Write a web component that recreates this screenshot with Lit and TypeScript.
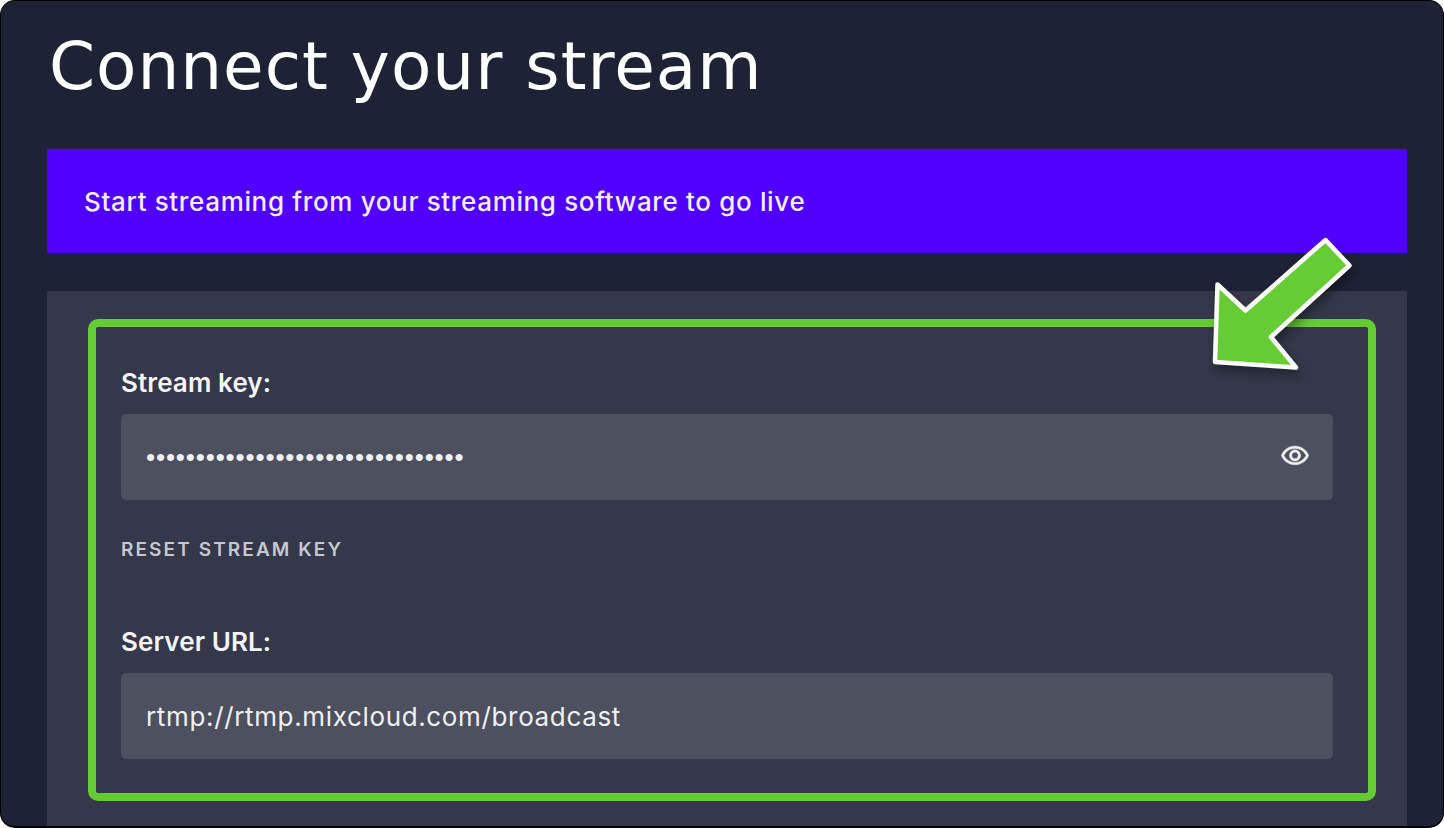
import { LitElement, html, css } from "lit";
import { customElement } from "lit/decorators.js";

@customElement("app-root")
export class AppRoot extends LitElement {
  static styles = css`
    :host { display: block; width: 1444px; height: 828px; background: #fff; font-family: "Inter", "Liberation Sans", sans-serif; }
    .shell { position: relative; box-sizing: border-box; width: 1444px; height: 828px; background: #1e2235; border: 1px solid #000; border-bottom-width: 2px; border-radius: 15px; overflow: hidden; padding: 0 36px 0 46px; }
    h1 { margin: 0; height: 148px; padding: 28px 0 0 2px; box-sizing: border-box; font-family: "DejaVu Sans", sans-serif; font-weight: 400; font-size: 66px; line-height: 76px; letter-spacing: 1px; color: #fff; }
    .banner { height: 104px; background: #5000ff; display: flex; align-items: center; padding-left: 37px; color: #f2eeff; font-size: 26px; font-weight: 500; letter-spacing: 0.65px; }
    .panel { margin-top: 38px; height: 540px; background: #34384a; padding: 28px 31px 0 41px; box-sizing: border-box; }
    .box { box-sizing: border-box; height: 482px; border: 8px solid #66cc33; border-radius: 10px; padding: 38px 35px 0 25px; }
    label { display: block; font-size: 26px; line-height: 36px; font-weight: 600; color: #f4f4f6; letter-spacing: 0.1px; }
    .field { margin-top: 13px; height: 86px; border-radius: 5px; background: #4d505f; display: flex; align-items: center; justify-content: space-between; padding: 0 23px 0 25px; color: #f0f0f2; font-size: 26px; letter-spacing: 0.65px; }
    .dots { font-family: "Liberation Sans", sans-serif; letter-spacing: 0.85px; }
    .eye { width: 30px; height: 30px; fill: #eceded; stroke: #eceded; stroke-width: 0.3; display: block; margin-top: -2px; }
    .reset { margin-top: 40px; height: 20px; line-height: 20px; font-size: 19px; font-weight: 600; letter-spacing: 2.1px; color: #c6c8cf; }
    .second { margin-top: 64px; }
    .arrow { position: absolute; left: -1px; top: -1px; width: 1444px; height: 828px; pointer-events: none; filter: drop-shadow(3px 6px 5px rgba(0,0,0,.35)); }
  `;

  render() {
    return html`<div class="shell">
      <h1>Connect your stream</h1>
      <div class="banner">Start streaming from your streaming software to go live</div>
      <div class="panel">
        <div class="box">
          <label>Stream key:</label>
          <div class="field">
            <span class="dots">••••••••••••••••••••••••••••••••</span>
            <svg class="eye" viewBox="0 0 24 24"><path d="M12 6a9.77 9.77 0 0 1 8.82 5.5C19.17 14.87 15.79 17 12 17s-7.17-2.13-8.82-5.5A9.77 9.77 0 0 1 12 6m0-2C7 4 2.73 7.11 1 11.5 2.73 15.89 7 19 12 19s9.27-3.11 11-7.5C21.27 7.11 17 4 12 4zm0 5a2.5 2.5 0 0 1 0 5 2.5 2.5 0 0 1 0-5m0-2c-2.48 0-4.5 2.02-4.5 4.5S9.52 16 12 16s4.5-2.02 4.5-4.5S14.48 7 12 7z"/></svg>
          </div>
          <div class="reset">RESET STREAM KEY</div>
          <label class="second">Server URL:</label>
          <div class="field">rtmp://rtmp.mixcloud.com/broadcast</div>
        </div>
      </div>
      <svg class="arrow" viewBox="0 0 1444 828"><polygon points="1325.5,240 1349.5,265.5 1271,337 1296,367.5 1215,362 1217.5,284.5 1245.5,310.5" fill="#66cc33" stroke="#fff" stroke-width="4.5" stroke-linejoin="round"/></svg>
    </div>`;
  }
}
